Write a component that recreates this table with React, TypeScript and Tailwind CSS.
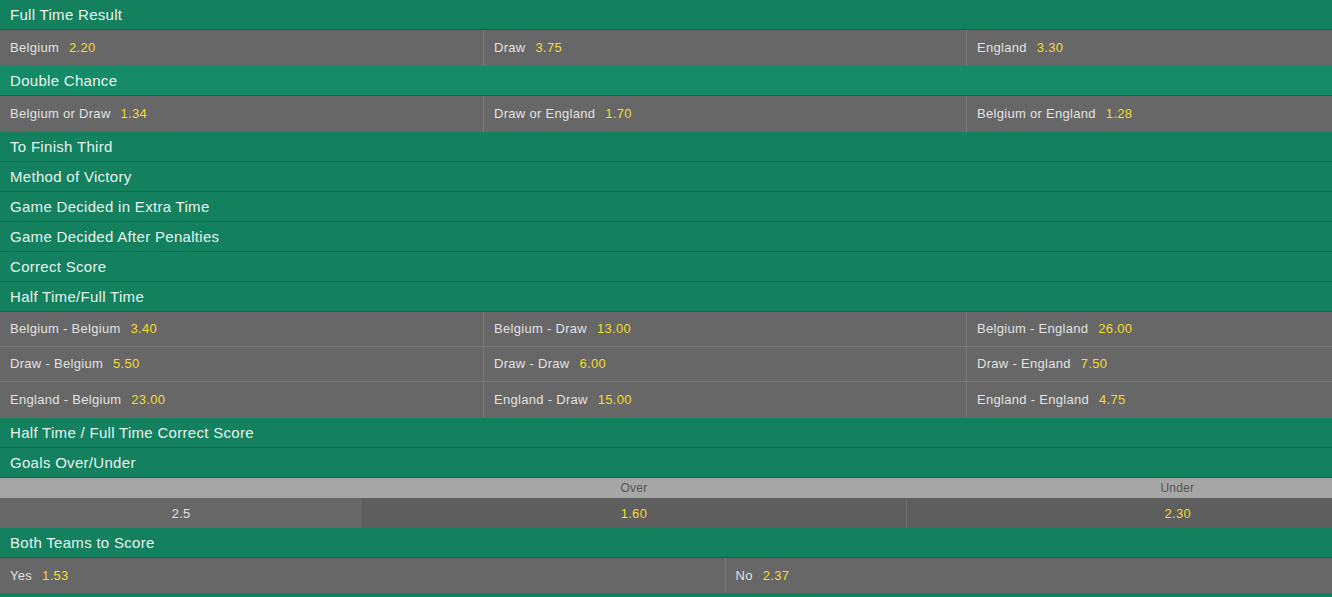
import React from 'react'

type Sel = { name: string; odds: string }

const font = { fontFamily: '"Liberation Sans", Arial, sans-serif' }

function Header({ title, alt }: { title?: string; alt?: boolean }) {
  return (
    <div
      className={`h-[30px] flex items-center px-[10px] pt-[2px] border-b border-[#0d6a4c] text-[15px] tracking-[0.3px] text-[#e9f3ee] ${
        alt ? 'bg-[#158a67]' : 'bg-[#13805e]'
      }`}
    >
      {title}
    </div>
  )
}

function Cell({ sel, first }: { sel: Sel; first?: boolean }) {
  return (
    <div
      className={`flex items-center px-[10px] text-[13px] tracking-[0.3px] text-[#e2e2e2] ${
        first ? '' : 'border-l border-[#7a7a7a]'
      }`}
    >
      <span>{sel.name}</span>
      <span className="ml-[10px] text-[#f5dc2a]">{sel.odds}</span>
    </div>
  )
}

function OddsRow({ sels, h = 'h-[36px]', last }: { sels: Sel[]; h?: string; last?: boolean }) {
  const cols = sels.length === 3 ? 'grid-cols-3' : 'grid-cols-2'
  return (
    <div className={`grid ${cols} ${h} bg-[#676767] ${last ? '' : 'border-b border-[#7a7a7a]'}`}>
      {sels.map((s, i) => (
        <Cell key={s.name} sel={s} first={i === 0} />
      ))}
    </div>
  )
}

export default function App() {
  return (
    <div className="w-[1332px] h-[597px] overflow-hidden bg-[#13805e]" style={font}>
      <div className="w-[1449px]">
        <Header title="Full Time Result" />
        <OddsRow
          last
          sels={[
            { name: 'Belgium', odds: '2.20' },
            { name: 'Draw', odds: '3.75' },
            { name: 'England', odds: '3.30' },
          ]}
        />
        <Header title="Double Chance" alt />
        <OddsRow
          last
          sels={[
            { name: 'Belgium or Draw', odds: '1.34' },
            { name: 'Draw or England', odds: '1.70' },
            { name: 'Belgium or England', odds: '1.28' },
          ]}
        />
        <Header title="To Finish Third" />
        <Header title="Method of Victory" />
        <Header title="Game Decided in Extra Time" />
        <Header title="Game Decided After Penalties" />
        <Header title="Correct Score" />
        <Header title="Half Time/Full Time" />
        <OddsRow
          h="h-[35px]"
          sels={[
            { name: 'Belgium - Belgium', odds: '3.40' },
            { name: 'Belgium - Draw', odds: '13.00' },
            { name: 'Belgium - England', odds: '26.00' },
          ]}
        />
        <OddsRow
          h="h-[35px]"
          sels={[
            { name: 'Draw - Belgium', odds: '5.50' },
            { name: 'Draw - Draw', odds: '6.00' },
            { name: 'Draw - England', odds: '7.50' },
          ]}
        />
        <OddsRow
          h="h-[36px]"
          last
          sels={[
            { name: 'England - Belgium', odds: '23.00' },
            { name: 'England - Draw', odds: '15.00' },
            { name: 'England - England', odds: '4.75' },
          ]}
        />
        <Header title="Half Time / Full Time Correct Score" />
        <Header title="Goals Over/Under" />
        <div className="grid grid-cols-[25%_37.5%_37.5%] h-[20px] bg-[#a6a6a6] text-[12px] tracking-[0.2px] text-[#555]">
          <div />
          <div className="flex items-center justify-center">Over</div>
          <div className="flex items-center justify-center">Under</div>
        </div>
        <div className="grid grid-cols-[25%_37.5%_37.5%] h-[30px] text-[13px] tracking-[0.3px]">
          <div className="flex items-center justify-center pt-px bg-[#676767] text-[#e2e2e2]">2.5</div>
          <div className="flex items-center justify-center pt-px bg-[#5e5e5e] text-[#f5dc2a]">1.60</div>
          <div className="flex items-center justify-center pt-px bg-[#5e5e5e] border-l border-[#6e6e6e] text-[#f5dc2a]">
            2.30
          </div>
        </div>
        <Header title="Both Teams to Score" />
        <OddsRow
          h="h-[35px]"
          last
          sels={[
            { name: 'Yes', odds: '1.53' },
            { name: 'No', odds: '2.37' },
          ]}
        />
        <Header />
      </div>
    </div>
  )
}
